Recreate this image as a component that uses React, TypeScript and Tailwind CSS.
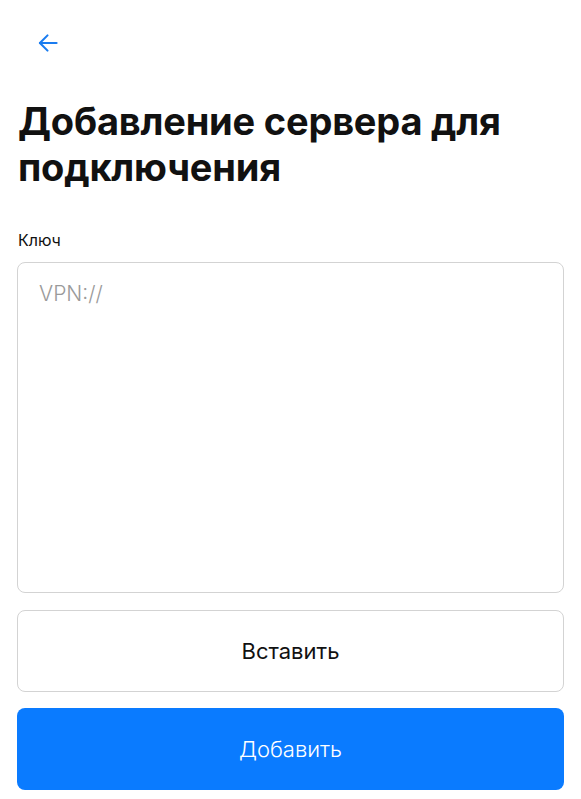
import React, { useState } from "react";

export default function App() {
  const [key, setKey] = useState("");

  return (
    <div className="min-h-screen bg-white px-[17px] pt-[33px] pb-[10px]" style={{ fontFamily: "Inter, 'Noto Sans', sans-serif" }}>
      {/* Back */}
      <button className="ml-[21px] flex h-[20px] w-[20px] items-center justify-center text-[#1a7cf0]">
        <svg width="21" height="20" viewBox="0 0 21 20" fill="none" stroke="currentColor" strokeWidth="2.2" strokeLinecap="round" strokeLinejoin="round">
          <path d="M19.5 10H2" />
          <path d="M10 2L2 10l8 8" />
        </svg>
      </button>

      {/* Title */}
      <h1 className="mt-[45px] ml-px text-[38px] font-bold leading-[46px] tracking-[-0.2px] text-[#111]">
        Добавление сервера для подключения
      </h1>

      <label className="mt-[40px] ml-px block text-[16px] leading-[20px] text-[#111]">Ключ</label>

      <textarea
        value={key}
        onChange={(e) => setKey(e.target.value)}
        placeholder="VPN://"
        className="mt-[12px] block h-[331px] w-full resize-none rounded-[8px] border border-[#d3d3d3] px-[21px] py-[18px] text-[21px] font-light leading-[26px] text-[#111] placeholder-[#9a9a9a] focus:outline-none"
      />

      <button className="mt-[17px] flex h-[82px] w-full items-center justify-center rounded-[8px] border border-[#d3d3d3] bg-white text-[22px] text-[#111]">
        Вставить
      </button>

      <button className="mt-[16px] flex h-[82px] w-full items-center justify-center rounded-[8px] bg-[#0a7bff] text-[22px] font-light text-white">
        Добавить
      </button>
    </div>
  );
}
